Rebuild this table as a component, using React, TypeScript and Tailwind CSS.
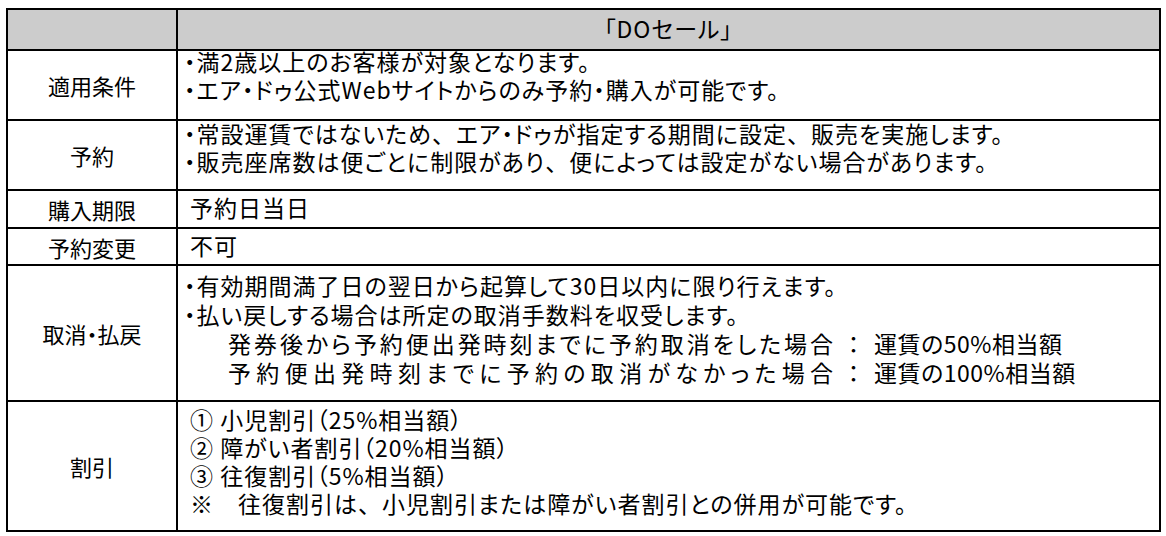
import React from "react";

function Row({
  label,
  h,
  children,
  pad = "",
}: {
  label?: React.ReactNode;
  h: string;
  children?: React.ReactNode;
  pad?: string;
}) {
  return (
    <div className={`flex ${h} border-t-2 border-black`}>
      <div className="w-[170px] shrink-0 border-r-2 border-black flex items-center justify-center text-[22px] tracking-[0px]">
        {label}
      </div>
      <div className={`flex-1 flex flex-col justify-center pl-[12px] ${pad}`}>{children}</div>
    </div>
  );
}

function C() {
  return <span className="[font-feature-settings:normal]">、</span>;
}

export default function App() {
  return (
    <div className="w-[1166px] h-[536px] bg-white pt-[8px] pl-[6px] text-black text-[23px] leading-[28px] tracking-[1px] [font-feature-settings:'palt'] font-['Noto_Sans_CJK_JP','Noto_Sans_CJK_SC',sans-serif]">
      <div className="w-[1155px] border-2 border-t-0 border-black">
        <div className="flex h-[41px] bg-[#cccccc] border-t-2 border-black">
          <div className="w-[170px] shrink-0 border-r-2 border-black" />
          <div className="flex-1 flex items-center justify-center pb-[4px]">「DOセール」</div>
        </div>
        <Row label="適用条件" h="h-[70px]" pad="pb-[20px]">
          <div className="-ml-[6px]">・満2歳以上のお客様が対象となります。</div>
          <div className="-ml-[6px]">・エア・ドゥ公式Webサイトからのみ予約・購入が可能です。</div>
        </Row>
        <Row label="予約" h="h-[70px]" pad="pb-[17px]">
          <div className="-ml-[6px]">
            ・常設運賃ではないため<C />エア・ドゥが指定する期間に設定<C />販売を実施します。
          </div>
          <div className="-ml-[6px]">
            ・販売座席数は便ごとに制限があり<C />便によっては設定がない場合があります。
          </div>
        </Row>
        <Row label="購入期限" h="h-[38px]" pad="pb-[4px]">
          <div>予約日当日</div>
        </Row>
        <Row label="予約変更" h="h-[37px]" pad="pb-[4px]">
          <div>不可</div>
        </Row>
        <Row label="取消・払戻" h="h-[136px]" pad="pb-[8px] leading-[29px]">
          <div className="-ml-[6px]">・有効期間満了日の翌日から起算して30日以内に限り行えます。</div>
          <div className="-ml-[6px]">・払い戻しする場合は所定の取消手数料を収受します。</div>
          <div className="grid grid-cols-[606px_40px_auto] pl-[38px]">
            <span className="[text-align-last:justify]">発券後から予約便出発時刻までに予約取消をした場合</span>
            <span className="text-center">：</span>
            <span className="tracking-[0.5px]">運賃の50%相当額</span>
            <span className="[text-align-last:justify]">予約便出発時刻までに予約の取消がなかった場合</span>
            <span className="text-center">：</span>
            <span className="tracking-[0.5px]">運賃の100%相当額</span>
          </div>
        </Row>
        <Row label="割引" h="h-[130px]" pad="pb-[10px]">
          <div>① 小児割引（25%相当額）</div>
          <div>② 障がい者割引（20%相当額）</div>
          <div>③ 往復割引（5%相当額）</div>
          <div>
            ※　往復割引は<C />小児割引または障がい者割引との併用が可能です。
          </div>
        </Row>
      </div>
    </div>
  );
}
